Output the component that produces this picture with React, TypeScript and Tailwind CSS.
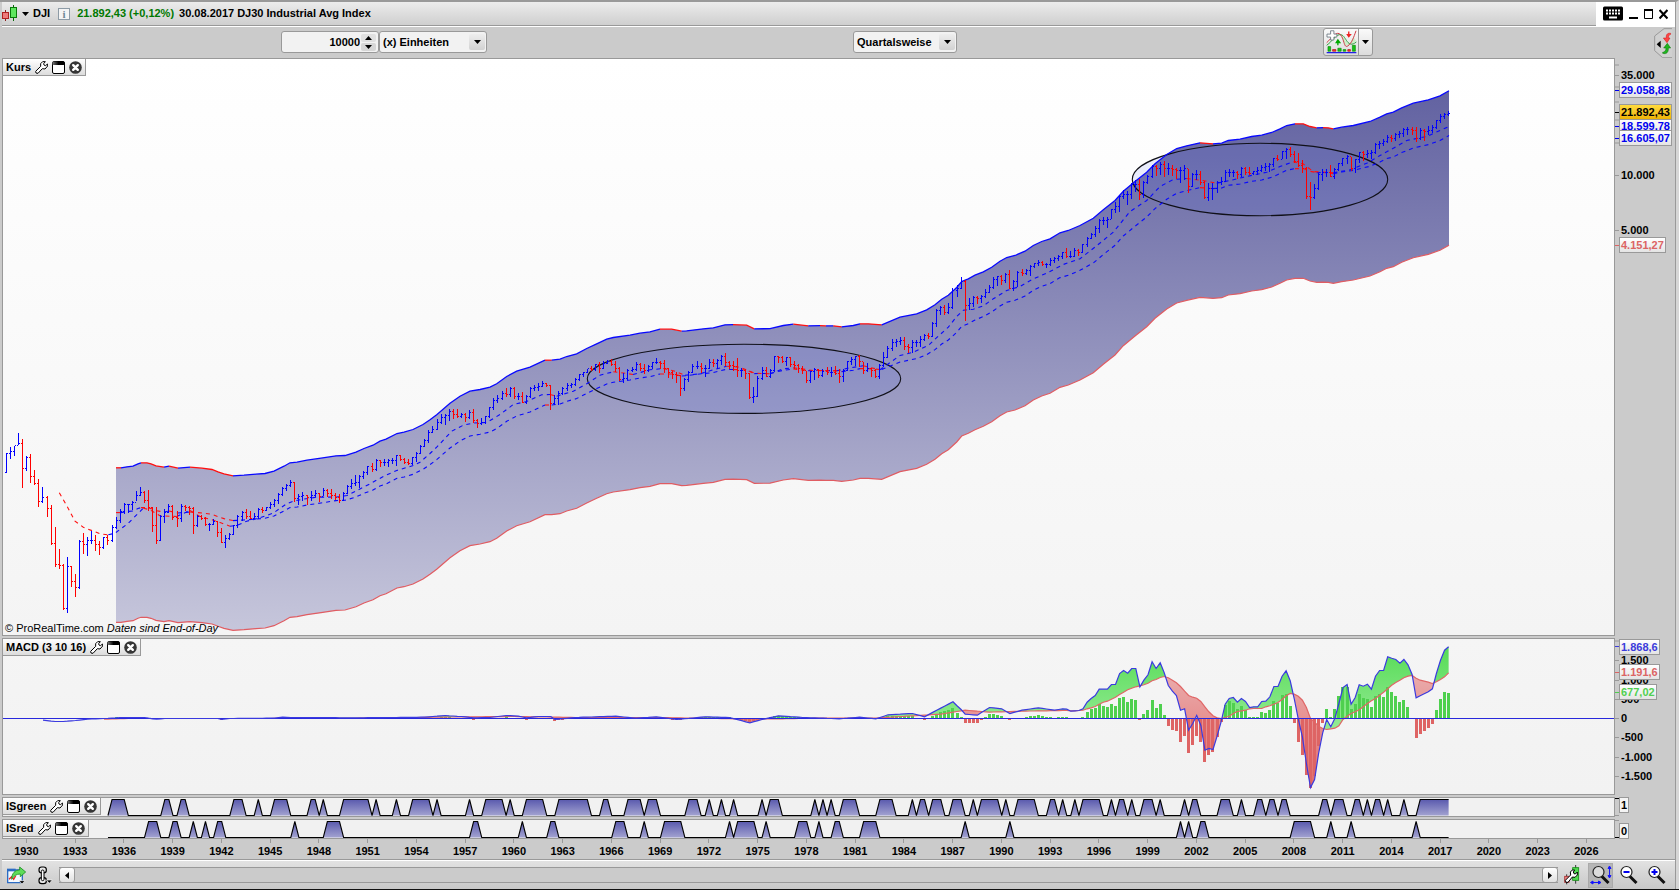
import { useId, type ReactNode } from 'react';

const FIRST_BAR_X = 3.4;
const BAR_STEP = 4.0626;
const PLOT_W = 1611;
const KURS_H = 576;
const MACD_H = 155;

const barX = (i: number) => FIRST_BAR_X + i * BAR_STEP;
const crispX = (i: number) => Math.floor(barX(i)) + 0.5;
const parse = (s: string) => s.trim().split(/[\s,]+/).map(Number);

// high low close per quarter, in thirds of a pixel below `base`
const QUARTERS: { base: number; data: string }[] = [
  {
    base: 351,
    data: `130 190 130, 112 146 124, 108 138 105, 70 105 100, 88 233 176, 138 182 142, 133 220 198,
    180 226 220, 208 290 274, 232 280 262, 258 320 295, 285 405 400, 352 472 462, 418 478 466,
    462 600 596, 442 608 470, 468 532 514, 492 560 532, 390 536 394, 370 432 404, 380 437 392,
    364 402 390, 374 422 402, 392 434 412, 382 418 382, 374 405 390, 346 396 352, 320 356 330,
    298 340 303, 278 312 284, 282 310 283, 274 300 278, 244 274 256, 232 258 246, 244 280 270,
    240 302 292, 290 366 346, 290 402 392, 316 394 320, 298 338 308, 282 310 290, 284 330 322,
    304 350 326, 282 336 290, 284 304 292, 288 314 296, 290 372 346, 316 350 320, 316 330 326,
    322 348 342, 338 362 342, 328 344 334, 334 380 366, 354 400 396, 376 414 384, 368 390 374,
    344 376 346, 316 354 320, 304 332 308, 298 326 318, 302 328 324, 310 328 318, 294 326 298,
    292 308 302, 290 304 292, 276 298 284, 266 292 270, 250 282 254, 230 258 236, 222 242 226,
    210 232 218, 216 276 266, 252 284 258, 246 272 256, 254 284 262, 242 272 256, 240 262 250,
    248 276 260, 234 258 240, 236 262 250, 238 266 256, 250 270 262, 252 280 270, 246 272 250,
    224 252 228, 208 236 220, 196 228 218, 196 234 200, 184 208 186, 168 194 168, 158 186 178,
    146 184 150, 150 172 156, 148 168 156, 148 170 150, 144 162 151, 134 168 136, 134 152 148,
    144 162 156, 146 166 160, 140 166 142, 126 156 130, 106 132 110, 86 112 92, 60 98 66`,
  },
  {
    base: 241,
    data: `378 400 388, 358 390 366, 342 372 352, 342 374 346, 328 362 334, 328 358 344,
    326 354 350, 338 354 344, 338 366 352, 330 358 336, 328 368 360, 356 384 370, 354 374 366,
    348 372 350, 320 354 322, 294 330 300, 286 308 294, 274 300 280, 264 292 284, 262 292 264,
    262 296 288, 280 300 290, 276 310 306, 286 312 290, 262 294 266, 254 272 262, 250 272 258,
    244 262 250, 248 262 256, 254 330 310, 286 314 296, 274 316 280, 262 284 266, 248 272 256,
    250 264 254, 234 258 238, 222 244 224, 216 232 218, 206 218 206, 198 212 208, 192 212 194,
    186 218 206, 184 206 190, 180 192 184, 176 198 194, 182 216 206, 200 244 238, 218 248 236,
    206 240 210, 202 216 209, 186 214 192, 190 214 206, 192 222 212, 196 216 200, 186 208 188,
    174 192 186, 182 206 190, 180 220 206, 204 234 218, 214 236 222, 216 250 226, 226 288 266,
    234 272 238, 212 246 216, 192 220 200, 184 208 199, 188 218 206, 196 230 204, 178 208 188,
    178 200 190, 176 208 182, 164 196 168, 160 198 188, 184 208 196, 182 212 198, 174 230 210,
    204 230 212, 208 236 220, 218 298 292, 262 308 290, 228 292 236, 202 240 212, 200 232 230,
    206 234 212, 168 216 170, 168 188 172, 168 190 184, 172 198 172, 170 202 194, 182 206 196,
    192 218 204, 198 222 212, 214 248 242, 214 248 214, 204 240 208, 208 234 226, 208 230 214,
    202 226 218, 200 232 216, 198 224 220, 206 250 230, 206 246 210, 182 214 184, 172 196 178,
    168 198 170, 166 200 184, 186 222 212, 190 216 204, 204 232 210, 206 234 228, 192 236 196,
    156 200 172`,
  },
  {
    base: 171,
    data: `348 384 356, 326 362 336, 326 350 334, 320 344 330, 320 360 350, 342 370 352,
    330 368 338, 330 352 338, 318 350 328, 312 334 316, 308 328 318, 276 320 280, 238 290 240,
    228 256 232, 226 254 248, 220 252 232, 174 236 182, 166 202 174, 142 176 154, 150 274 226,
    204 240 220, 198 232 202, 198 222 206, 194 220 200, 178 204 186, 164 190 172, 140 176 148,
    138 168 140, 136 166 150, 128 158 132, 120 178 174, 150 182 154, 122 172 126, 118 138 130,
    116 136 122, 106 138 108, 98 114 100, 90 108 98, 92 108 104, 98 114 102, 84 108 90,
    80 100 86, 76 92 80, 66 86 68, 54 84 78, 64 84 79, 54 82 62, 58 78 66, 42 68 44`,
  },
  {
    base: 21,
    data: `472 502 474, 458 476 462, 438 472 446, 418 458 420, 412 436 420, 412 444 418,
    386 418 388, 366 398 380, 346 396 348, 330 358 342, 334 376 343, 308 358 312, 300 336 314,
    298 360 342, 302 354 306, 284 312 290, 254 294 258, 254 288 264, 246 284 252, 244 292 264,
    250 284 266, 254 288 268, 264 296 272, 260 308 271, 254 300 266, 268 338 318, 278 322 284,
    270 300 283, 272 314 306, 304 356 352, 308 364 324, 310 360 326, 304 340 308, 292 316 304,
    270 306 276, 266 290 276, 270 290 277, 272 298 282, 262 290 266, 260 284 276, 262 286 280,
    272 286 274, 262 284 270, 254 276 262, 248 272 260, 248 276 254, 234 262 236, 224 244 237,
    212 238 214, 204 236 208, 200 230 224, 212 250 244, 220 262 256, 240 280 266, 260 358 350,
    305 390 352, 312 358 324, 280 330 282, 266 302 276, 268 290 278, 256 292 290, 264 298 268,
    250 272 250, 234 258 234, 224 252 228, 230 272 266, 236 278 238, 216 248 218, 212 244 224,
    210 234 220, 210 236 218, 190 222 194, 184 206 190, 178 198 184, 164 190 172, 166 186 174,
    158 182 164, 152 174 160, 144 172 148, 140 164 149, 142 164 150, 142 186 176, 144 180 152,
    146 184 154, 138 164 150, 134 158 142, 120 148 122, 102 130 110, 98 118 104, 94 108 100`,
  },
];

type Quarter = { high: number; low: number; close: number };

const quarters: Quarter[] = QUARTERS.flatMap(({ base, data }) => {
  const n = parse(data);
  const out: Quarter[] = [];
  for (let k = 0; k < n.length; k += 3) {
    out.push({ high: base + n[k] / 3, low: base + n[k + 1] / 3, close: base + n[k + 2] / 3 });
  }
  return out;
});

type Point = [number, number];

function points(s: string): Point[] {
  const n = parse(s);
  const out: Point[] = [];
  for (let k = 0; k < n.length; k += 2) out.push([n[k] - 3, n[k + 1] - 58.5]);
  return out;
}

const upperBand = points(`
  116 467.3, 121 467.3, 127 466.3, 133 465.7, 138 463.3, 141 462.3, 147 462.3, 151 463.3, 156 465.3,
  164 466.7, 169 465.7, 178 467.7, 190 466.7, 202 467.7, 212 469, 218 471.3, 224 473.3, 233 475.3,
  244 474.7, 256 473.7, 265 473, 274 470.7, 284 465.7, 290 462.3, 297 461.7, 307 459.7, 321 457.7,
  336 455.3, 345 455, 356 451.7, 364 448, 373 444.7, 380 440.7, 386 438.7, 397 433, 404 431.7,
  413 429, 423 424, 430 419.3, 436.7 414.3, 450 402.7, 460 395.7, 470 390.7, 480 389, 490 386.7,
  496.7 383.3, 506.7 376, 516.7 370.7, 530 366.7, 545 359.7, 551.7 359.7, 560 358.7, 566.7 356,
  576.7 353.3, 586.7 348, 596.7 343.3, 606.7 338.7, 613.3 337, 630 334.7, 640 332.7, 650 331.3,
  660 328.7, 671.7 328.7, 681.7 330.7, 686.7 330.3, 703.3 328.3, 713.3 327.3, 725 324.3,
  733 324.2, 746.7 324.7, 754.3 328.3, 770 328.2, 783.3 325, 793.3 323.7, 808.3 325.3, 820 325.2,
  826 325.4, 833.3 325.3, 841.7 326.3, 853.3 325, 860 323.3, 868.3 323.3, 881.7 324.3, 900 316.7,
  916.7 313.3, 926.7 309.3, 935 304.3, 941.7 298.7, 948.3 294.7, 956.7 287, 961.7 281, 968.3 278.3,
  975 274.7, 983.3 271.3, 991.7 266.7, 1000 260.7, 1006.7 257, 1015 255, 1025 250.7, 1033.3 245,
  1041.7 241, 1050 238.3, 1060 232.3, 1068.3 230, 1080 225, 1093.3 217.7, 1103.3 209.3, 1115 200,
  1123.3 190.7, 1135 181, 1146.7 171.7, 1155 163.3, 1166.7 154, 1176.7 148, 1186.7 145.3,
  1200 142.3, 1213 143.3, 1221.7 142.7, 1228.3 140, 1240 138.7, 1251.7 136, 1261.7 134.7,
  1271.7 132, 1280 128.3, 1286.7 125, 1295 123.3, 1303.3 123.3, 1310 126, 1316.7 127.3, 1323 127.2,
  1328.3 127.3, 1333.3 128.3, 1341.7 126.7, 1353.3 125, 1370 121, 1380 116.7, 1386.7 113.3,
  1393.3 111.7, 1401.7 107.3, 1413.3 102.7, 1428.3 99.3, 1440 95.3, 1449 90.3`);

const fastAverage = points(`
  59.3 492.3, 66.7 505, 75 520.7, 83.3 526.7, 100 533.3, 108.3 534.3, 115 532.7, 128.3 522.7,
  143.3 507.7, 150 509.3, 160 515.3, 176.7 516, 190 510, 200 516, 216.7 520.7, 230 525.7,
  236.7 525, 246.7 520.7, 260 517.3, 273 512.7, 286.7 503.3, 293.3 500.7, 303 498.7, 316.7 496.7,
  336.7 496.5, 347 495, 358.3 489.3, 370 483.3, 383.3 476, 396.7 470, 413.3 465, 420 461.7,
  430 453, 436.7 446.7, 451.7 430.7, 463.3 424.7, 473.3 422.5, 486.7 422, 500 414, 513.3 404,
  526.7 401, 541.7 394.3, 550 394, 556.7 395.7, 573.3 390.7, 586.7 383.3, 600 374.7, 613.3 371.3,
  620 372, 633 374, 650 369.3, 663.3 368, 675 370.7, 685 374.7, 700 373.3, 713.3 369.3,
  726.7 365.7, 740 366.7, 755 372.7, 770 373.3, 783.3 368.3, 793.3 367.3, 813.3 370, 836.7 370.3,
  850 367.3, 863.3 365.3, 880 369.3, 900 355, 913.3 351.7, 928.3 345, 938.3 335.7, 948.3 326.7,
  956.7 316, 963.3 309.7, 973.3 308.7, 983.3 305.3, 993.3 298.3, 1006.7 290, 1020 286,
  1033.3 278.3, 1046.7 272.7, 1063.3 264, 1080 258.2, 1097 245, 1113.3 231.7, 1130 211,
  1146.7 200, 1160 186, 1173.3 179, 1186.7 178, 1203 180, 1216.7 182.7, 1230 180, 1246.7 176,
  1266.7 171.7, 1280 166, 1293.3 161.3, 1303 163.3, 1313.3 171, 1333.3 172.3, 1350 169.3,
  1366.7 162.7, 1380 155, 1393.3 147.7, 1406.7 140, 1426.7 136, 1440 130, 1449 126`);

const shift = (pts: Point[], dy: number): Point[] => pts.map(([x, y]) => [x, y + dy]);
const toPath = (pts: Point[]) => 'M' + pts.map(([x, y]) => `${x.toFixed(1)} ${y.toFixed(1)}`).join('L');

// blue while rising, red while falling or flat
function trendRuns(pts: Point[]) {
  const runs: { down: boolean; pts: Point[] }[] = [];
  for (let k = 1; k < pts.length; k++) {
    const down = pts[k][1] >= pts[k - 1][1];
    const last = runs[runs.length - 1];
    if (last && last.down === down) last.pts.push(pts[k]);
    else runs.push({ down, pts: [pts[k - 1], pts[k]] });
  }
  return runs;
}

function TrendLine({ pts, dashed }: { pts: Point[]; dashed?: boolean }) {
  return (
    <>
      {trendRuns(pts).map((r, k) => (
        <path
          key={k}
          d={toPath(r.pts)}
          fill="none"
          stroke={r.down ? '#ff1010' : '#0808ff'}
          strokeWidth={dashed ? 1.1 : 1.3}
          strokeDasharray={dashed ? '4 4' : undefined}
        />
      ))}
    </>
  );
}

const lowerBand = shift(upperBand, 154.5);
const slowAverage = shift(upperBand, 44.8);

function KursChart() {
  const up: string[] = [];
  const down: string[] = [];
  quarters.forEach((q, i) => {
    const open = i === 0 ? q.low - 1 : quarters[i - 1].close;
    const x = crispX(i);
    const o = Math.floor(open) + 0.5;
    const c = Math.floor(q.close) + 0.5;
    const d = `M${x} ${Math.round(q.high)}V${Math.round(q.low)}M${x - 1.5} ${o}h1M${x + 0.5} ${c}h1`;
    (c > o ? down : up).push(d);
  });
  return (
    <svg className="absolute inset-0 size-full" viewBox={`0 0 ${PLOT_W} ${KURS_H}`} preserveAspectRatio="none" role="img" aria-label="Kurs">
      <defs>
        <linearGradient id="band" gradientUnits="userSpaceOnUse" x1="0" y1="31" x2="0" y2="572">
          <stop offset="0" stopColor="#6262a1" />
          <stop offset="1" stopColor="#c6c6db" />
        </linearGradient>
      </defs>
      <path d={`${toPath(upperBand)}L${toPath([...lowerBand].reverse()).slice(1)}Z`} fill="url(#band)" />
      <g fill="#4664f0" fillOpacity="0.11" stroke="#101018" strokeWidth="1.1">
        <ellipse cx="741" cy="319.8" rx="156.7" ry="34.6" />
        <ellipse cx="1257" cy="120.5" rx="127.7" ry="36.2" />
      </g>
      <path d={toPath(lowerBand)} fill="none" stroke="#e05c62" strokeWidth="1.2" />
      <TrendLine pts={upperBand} />
      <TrendLine pts={slowAverage} dashed />
      <TrendLine pts={fastAverage} dashed />
      <g fill="none" strokeWidth="1" shapeRendering="crispEdges">
        <path d={down.join('')} stroke="#ff0000" />
        <path d={up.join('')} stroke="#0000ff" />
      </g>
    </svg>
  );
}

const MACD_ZERO = 79.5;

// sparse [bar, value] pairs are interpolated up to bar 260, the rest is given per bar
function series(sparse: string, dense: string) {
  const s = parse(sparse);
  const d = parse(dense);
  const out: number[] = [];
  for (let k = 0; k + 3 < s.length; k += 2) {
    for (let i = s[k]; i < s[k + 2]; i++) {
      out[i] = s[k + 1] + ((s[k + 3] - s[k + 1]) * (i - s[k])) / (s[k + 2] - s[k]);
    }
  }
  d.forEach((v, k) => (out[260 + k] = v));
  return out.map((v) => (v - 265) / 3);
}

const macd = series(
  `9 270, 12 274, 14 274, 17 271, 20 267, 24 265, 28 262, 34 262, 36 266, 37 267, 39 265, 52 265,
  53 268, 55 265, 66 264, 68 261, 70 262, 86 263, 95 262, 103 261, 108 256, 112 259, 115 263,
  119 262, 123 256, 126 258, 128 263, 131 259, 134 259, 135 268, 140 262, 150 258, 155 264,
  160 260, 165 268, 172 260, 178 262, 183 278, 186 268, 190 257, 196 262, 205 266, 210 261,
  214 266, 217 254, 223 250, 226 260, 229 240, 233 215, 235 238, 236 252, 239 255, 242 232,
  245 236, 247 250, 250 240, 254 233, 258 240, 260 236`,
  `236 237 243 242 241 236 216 205 196 177 177 177 163 163 130 121 129 115 115 170
  150 134 95 115 98 128 166 183 196 240 236 300 280 256 285 360 355 358 318 275
  222 205 202 216 205 214 232 230 230 214 213 200 169 169 138 122 152 205 267 320
  400 472 448 370 308 268 290 264 220 172 163 222 202 164 168 162 177 138 121 121
  80 84 88 99 88 104 133 203 197 191 185 176 130 90 60 50`,
);

const signal = series(
  `24 267, 30 265, 60 265, 95 264, 105 261, 115 260, 125 259, 140 262, 160 262, 185 267, 200 264,
  214 264, 220 259, 230 252, 236 240, 242 246, 250 243, 260 241`,
  `241 241 242 242 241 240 236 233 229 222 216 213 207 201 193 186 179 174 170 167
  164 159 152 148 142 139 143 150 158 169 183 196 201 204 214 230 245 257 263 265
  262 258 250 244 242 240 236 235 235 235 230 227 222 217 208 197 190 192 198 210
  232 265 276 288 295 298 296 294 287 268 258 250 245 239 230 220 212 205 195 186
  176 165 157 150 143 138 136 144 150 153 156 160 155 148 140 128`,
);

// areas between the two lines, split where they cross
function macdAreas() {
  const areas: { up: boolean; d: string }[] = [];
  let top: Point[] = [];
  let bottom: Point[] = [];
  let up = macd[60] < signal[60];
  const flush = () => {
    if (top.length > 1) areas.push({ up, d: `${toPath(top)}L${toPath([...bottom].reverse()).slice(1)}Z` });
  };
  for (let i = 60; i < macd.length; i++) {
    const diff = macd[i] - signal[i];
    if (i > 60 && diff < 0 !== up) {
      const prev = macd[i - 1] - signal[i - 1];
      const t = prev / (prev - diff || 1);
      const cross: Point = [barX(i - 1 + t), MACD_ZERO + macd[i - 1] + (macd[i] - macd[i - 1]) * t];
      top.push(cross);
      bottom.push(cross);
      flush();
      top = [cross];
      bottom = [cross];
      up = diff < 0;
    }
    top.push([barX(i), MACD_ZERO + macd[i]]);
    bottom.push([barX(i), MACD_ZERO + signal[i]]);
  }
  flush();
  return areas;
}

const linePoints = (values: number[], from: number): Point[] =>
  values.map((v, i): Point => [barX(i), MACD_ZERO + v]).slice(from);

function MacdChart() {
  return (
    <svg className="absolute inset-0 size-full" viewBox={`0 0 ${PLOT_W} ${MACD_H}`} preserveAspectRatio="none" role="img" aria-label="MACD">
      <defs>
        <linearGradient id="gain" gradientUnits="userSpaceOnUse" x1="0" y1="10" x2="0" y2="100">
          <stop offset="0" stopColor="#58dc58" />
          <stop offset="1" stopColor="#9cec9c" />
        </linearGradient>
        <linearGradient id="loss" gradientUnits="userSpaceOnUse" x1="0" y1="30" x2="0" y2="150">
          <stop offset="0" stopColor="#eaaeae" />
          <stop offset="1" stopColor="#e26a6a" />
        </linearGradient>
      </defs>
      {macdAreas().map((a, k) => (
        <path key={k} d={a.d} fill={a.up ? 'url(#gain)' : 'url(#loss)'} />
      ))}
      <g shapeRendering="crispEdges">
        {signal.map((s, i) => {
          const h = macd[i] - s;
          if (Math.abs(h) < 0.6) return null;
          return (
            <rect
              key={i}
              x={Math.floor(barX(i)) - 1}
              width="3"
              y={h < 0 ? MACD_ZERO + h : MACD_ZERO}
              height={Math.abs(h)}
              fill={h < 0 ? '#4fd04f' : '#de6464'}
            />
          );
        })}
      </g>
      <path d={toPath(linePoints(signal, 24))} fill="none" stroke="#e06666" strokeWidth="1.2" />
      <path d={`M0 ${MACD_ZERO}H${PLOT_W}`} stroke="#2828dc" strokeWidth="1" />
      <path d={toPath(linePoints(macd, 9))} fill="none" stroke="#3a3adf" strokeWidth="1.2" />
    </svg>
  );
}

const GREEN_RUNS = parse(`26 29 39 40 43 44 56 58 62 62 66 69 75 76 78 78 83 89 91 91 96 96 100 104
  106 106 114 114 118 122 124 124 128 132 136 143 147 148 153 156 158 160 168 170 173 173 176 176
  179 179 186 186 188 190 199 199 201 201 203 203 206 209 215 218 223 223 225 226 228 230 233 235
  238 238 240 244 246 246 249 253 257 258 260 260 263 263 265 269 272 272 274 275 277 277 280 282
  284 284 290 290 292 293 299 301 304 304 308 309 311 312 314 315 324 325 327 329 332 333 335 335
  337 338 340 340 344 344 348 355`);
const RED_RUNS = parse(`35 37 41 42 46 46 49 49 52 53 71 71 79 82 115 116 127 127 134 135 150 152
  157 157 162 166 178 178 180 184 187 187 195 197 200 200 204 205 211 214 236 236 247 247 289 289
  291 291 294 295 317 321 326 326 331 331 347 347`);

function FlagChart({ runs, label }: { runs: number[]; label: string }) {
  const id = useId();
  const last = 355;
  let d = `M${barX(25)} 17.5`;
  for (let k = 0; k < runs.length; k += 2) {
    const [a, b] = [runs[k], runs[k + 1]];
    d += `L${barX(a - 1)} 17.5L${barX(a)} 1.5L${barX(b)} 1.5`;
    if (b < last) d += `L${barX(b + 1)} 17.5`;
  }
  const open = runs[runs.length - 1] === last;
  const line = open ? d : `${d}L${barX(last)} 17.5`;
  return (
    <svg className="absolute inset-0 size-full" viewBox={`0 0 ${PLOT_W} 18`} preserveAspectRatio="none" role="img" aria-label={label}>
      <linearGradient id={id} x1="0" y1="0" x2="0" y2="1">
        <stop offset="0" stopColor="#5a5aae" />
        <stop offset="1" stopColor="#a2a2d0" />
      </linearGradient>
      <path d={`${line}L${barX(last)} 17.5Z`} fill={`url(#${id})`} />
      <path d={line} fill="none" stroke="#000" strokeWidth="1.1" />
    </svg>
  );
}

function WrenchIcon() {
  return (
    <svg className="size-[13px]" viewBox="0 0 39 39" aria-hidden="true">
      <path
        d="M2 31L17 16 17 8 23 2H31L26 8 27 12 31 14 38 9V15L30 24 22 23 9 37 3 36Z"
        fill="#fff"
        stroke="#000"
        strokeWidth="3"
        strokeLinejoin="round"
      />
    </svg>
  );
}

function WindowIcon() {
  return (
    <svg className="size-[13px]" viewBox="0 0 13 13" aria-hidden="true">
      <linearGradient id="winbar" x1="0" y1="0" x2="1" y2="0">
        <stop offset="0" stopColor="#777" />
        <stop offset="0.5" stopColor="#000" />
      </linearGradient>
      <rect x="0.5" y="0.5" width="12" height="12" rx="1.5" fill="#fff" stroke="#000" />
      <rect x="0.5" y="0.5" width="12" height="3.5" rx="1" fill="url(#winbar)" />
    </svg>
  );
}

function CloseIcon() {
  return (
    <svg className="size-[13px]" viewBox="0 0 13 13" aria-hidden="true">
      <circle cx="6.5" cy="6.5" r="6.3" fill="#363636" />
      <path d="M4.2 4.2l4.6 4.6M8.8 4.2L4.2 8.8" stroke="#fff" strokeWidth="2.4" strokeLinecap="round" />
    </svg>
  );
}

function PanelTag({ title }: { title: string }) {
  return (
    <div className="absolute left-0 top-0 flex h-[17px] items-center gap-1 border-b border-r border-[#999] bg-linear-to-b from-white to-[#dcdcdc] pl-[3px] pr-[3px]">
      <span className="whitespace-nowrap leading-4">{title}</span>
      <button type="button" aria-label={`${title} Einstellungen`}><WrenchIcon /></button>
      <button type="button" aria-label={`${title} Fenster`}><WindowIcon /></button>
      <button type="button" aria-label={`${title} schließen`}><CloseIcon /></button>
    </div>
  );
}

type AxisMark = { y: number; text?: string; tag?: string; tick?: string };

const KURS_MARKS: AxisMark[] = [
  { y: 7 },
  { y: 17, text: '35.000' },
  { y: 29 },
  { y: 44 },
  { y: 62 },
  { y: 85 },
  { y: 117, text: '10.000' },
  { y: 172, text: '5.000' },
  { y: 32, text: '29.058,88', tag: 'text-[#0000f0] bg-linear-to-b from-white to-[#e4e4e4]', tick: 'bg-[#0000f0]' },
  { y: 68, text: '18.599,78', tag: 'text-[#0000f0] bg-linear-to-b from-white to-[#e4e4e4]', tick: 'bg-[#0000f0]' },
  { y: 54, text: '21.892,43', tag: 'text-black bg-linear-to-b from-[#ffdb3c] to-[#eeb400]', tick: 'bg-black' },
  { y: 80, text: '16.605,07', tag: 'text-[#0000f0] bg-linear-to-b from-white to-[#e4e4e4]', tick: 'bg-[#0000f0]' },
  { y: 187, text: '4.151,27', tag: 'text-[#dc6464] bg-linear-to-b from-white to-[#e4e4e4]', tick: 'bg-[#dc6464]' },
];

const MACD_MARKS: AxisMark[] = [
  { y: 3 },
  { y: 22, text: '1.500' },
  { y: 42, text: '1.000' },
  { y: 61, text: '500' },
  { y: 80, text: '0' },
  { y: 99, text: '-500' },
  { y: 119, text: '-1.000' },
  { y: 138, text: '-1.500' },
  { y: 9, text: '1.868,6', tag: 'text-[#3c3cdc] bg-linear-to-b from-white to-[#e4e4e4]', tick: 'bg-[#3c3cdc]' },
  { y: 34, text: '1.191,6', tag: 'text-[#dc6464] bg-linear-to-b from-white to-[#e4e4e4]', tick: 'bg-[#dc6464]' },
  { y: 54, text: '677,02', tag: 'text-[#50d050] bg-linear-to-b from-white to-[#e4e4e4]', tick: 'bg-[#50d050]' },
];

function Axis({ marks, height }: { marks: AxisMark[]; height: number }) {
  return (
    <div className="relative w-[60px] shrink-0">
      {marks.map((m, k) => (
        <div key={k} className="absolute left-0 flex -translate-y-1/2 items-center" style={{ top: `${(m.y / height) * 100}%` }}>
          <span className={`h-px w-1 ${m.tick ?? 'bg-[#999]'}`} />
          {m.text && (
            <span className={`border px-px leading-[14px] ${m.tag ? `border-[#999] ${m.tag}` : 'border-transparent'}`}>{m.text}</span>
          )}
        </div>
      ))}
    </div>
  );
}

type PanelRowProps = { className: string; plot: string; axis: ReactNode; children: ReactNode };

function PanelRow({ className, plot, axis, children }: PanelRowProps) {
  return (
    <section className={`flex ${className}`}>
      <div className={`relative min-w-0 flex-1 border border-[#999] ${plot}`}>{children}</div>
      {axis}
    </section>
  );
}

const YEARS = Array.from({ length: 33 }, (_, k) => 1930 + 3 * k);

function Caret({ className = '' }: { className?: string }) {
  return (
    <svg className={`h-1 w-[7px] ${className}`} viewBox="0 0 7 4" aria-hidden="true">
      <path d="M0 0H7L3.5 4Z" fill="#000" />
    </svg>
  );
}

function Select({ label, width, options }: { label: string; width: string; options: string[] }) {
  return (
    <div className={`relative h-[22px] ${width}`}>
      <select aria-label={label} className="size-full appearance-none rounded-[3px] border border-[#999] bg-[#f2f2f2] pl-[3px] pr-5 outline-none">
        {options.map((o) => (
          <option key={o}>{o}</option>
        ))}
      </select>
      <span className="pointer-events-none absolute inset-y-[3px] right-[2px] flex w-4 items-center justify-center rounded-xs bg-linear-to-b from-[#eee] to-[#d2d2d2]">
        <Caret />
      </span>
    </div>
  );
}

function TitleBar() {
  return (
    <header className="flex h-6 items-center border-b border-[#999] bg-linear-to-b from-[#ececec] to-[#cfcfcf]">
      <svg className="h-[17px] w-4" viewBox="0 0 16 17" aria-hidden="true">
        <path d="M3.5 5v11" stroke="#8c1f1f" />
        <rect x="0.5" y="7.5" width="6" height="6" fill="#ee7b7b" stroke="#b02020" />
        <path d="M11.5 0v16" stroke="#0a6a0a" />
        <rect x="8.5" y="2.5" width="6" height="10" fill="#5fe65f" stroke="#0a7a0a" />
      </svg>
      <button type="button" aria-label="Wert auswählen" className="ml-1 flex items-center gap-1">
        <Caret />
        <span>DJI</span>
      </button>
      <span className="ml-2 flex size-3 items-center justify-center border border-[#8d9ba6] bg-[#f4f4f4] font-['Liberation_Serif',serif] leading-3 text-[#6f8796]">i</span>
      <span className="ml-[7px] text-[#007800]">21.892,43 (+0,12%)</span>
      <span className="ml-[5px]">30.08.2017</span>
      <span className="ml-[3px]">DJ30 Industrial Avg Index</span>
      <div className="ml-auto flex h-6 items-center gap-[6px] bg-white px-[7px]">
        <svg className="h-[15px] w-5" viewBox="0 0 20 15" aria-hidden="true">
          <rect width="20" height="14" y="0.5" rx="1.5" fill="#000" />
          <path d="M3 4.5h14M3 7.5h14" stroke="#fff" strokeWidth="2" strokeDasharray="2 1" />
          <path d="M6 11.5h8" stroke="#fff" strokeWidth="2" />
        </svg>
        <button type="button" aria-label="Minimieren">
          <svg className="h-3 w-[9px]" viewBox="0 0 9 12"><path d="M0 10h9" stroke="#000" strokeWidth="2" /></svg>
        </button>
        <button type="button" aria-label="Maximieren">
          <svg className="h-3 w-[9px]" viewBox="0 0 9 12"><path d="M0.5 2.5h8v8h-8z" fill="none" stroke="#000" /><path d="M0 2h9" stroke="#000" strokeWidth="2" /></svg>
        </button>
        <button type="button" aria-label="Schließen">
          <svg className="h-3 w-[9px]" viewBox="0 0 9 12"><path d="M0.5 2L8.5 10.5M8.5 2L0.5 10.5" stroke="#000" strokeWidth="2.2" /></svg>
        </button>
      </div>
    </header>
  );
}

function IndicatorIcon() {
  return (
    <svg className="h-6 w-[31px]" viewBox="0 0 94 72" aria-hidden="true">
      <path d="M4 44C20 34 30 12 44 14S60 56 92 34L84 22 70 44 58 46 44 12 30 22Z" fill="#cdeec9" />
      <path d="M2 46C20 34 30 10 46 14S64 58 92 36" fill="none" stroke="#2e9e3c" strokeWidth="3" />
      <path d="M2 38C18 24 32 0 44 14S54 56 66 48 84 22 91 2" fill="none" stroke="#cc3a44" strokeWidth="3" />
      <path d="M14 2h10v10h9v9h-9v9H14v-9H3v-9h11z" fill="#fff" stroke="#66727c" strokeWidth="2.5" />
      <path d="M69 4v10M65 14h9l-5 6z" stroke="#e22" strokeWidth="4" fill="#e22" />
      <path d="M36 46V38M31 38h11l-6-8z" stroke="#0a0" strokeWidth="4" fill="#0a0" />
      <path d="M6 64V50h8v14zM36 64v-9h10v9zM52 64v-5h8v5zM80 64V46h9v18z" fill="#16c316" stroke="#0a8a0a" strokeWidth="2" />
      <path d="M20 64v-5h10v5zM66 64v-5h8v5z" fill="#f33" stroke="#a11" strokeWidth="2" />
      <path d="M2 68H92" stroke="#2222e6" strokeWidth="4" />
    </svg>
  );
}

function Toolbar() {
  return (
    <div className="grid h-8 grid-cols-[279fr_572fr_470fr_331fr_21fr] border-t border-white">
      <div className="col-start-2 flex pt-1">
        <div className="flex h-[22px] w-[98px] items-center rounded-[3px] border border-[#999] bg-[#f2f2f2] pr-[2px]">
          <input aria-label="Anzahl" defaultValue="10000" className="min-w-0 flex-1 bg-transparent text-right outline-none" />
          <span className="ml-px flex w-[15px] flex-col gap-px">
            <button type="button" aria-label="Mehr" className="flex h-2 items-center justify-center rounded-xs bg-[#e0e0e0]">
              <Caret className="w-[5px] rotate-180" />
            </button>
            <button type="button" aria-label="Weniger" className="flex h-2 items-center justify-center rounded-xs bg-[#d6d6d6]">
              <Caret className="w-[5px]" />
            </button>
          </span>
        </div>
        <Select label="Einheit" width="w-[108px]" options={['(x) Einheiten', 'Jahre']} />
      </div>
      <div className="flex pt-1">
        <Select label="Periode" width="w-[104px]" options={['Quartalsweise', 'Monatlich', 'Wöchentlich']} />
      </div>
      <div className="flex pt-px">
        <div className="flex h-[28px] overflow-hidden rounded-[3px] border border-[#999] bg-linear-to-b from-[#fafafa] to-[#dcdcdc]">
          <button type="button" aria-label="Indikator hinzufügen" className="flex w-[35px] items-center justify-center border-r border-[#999]">
            <IndicatorIcon />
          </button>
          <button type="button" aria-label="Indikatorliste" className="flex w-[13px] items-center justify-center">
            <Caret />
          </button>
        </div>
      </div>
      <button type="button" aria-label="Handelsleiste">
        <svg className="h-[30px] w-[18px]" viewBox="0 0 54 90" aria-hidden="true">
          <path d="M54 2H30L2 24V68L26 89H54" fill="#d0d0d0" stroke="#999" strokeWidth="3" />
          <path d="M20 38V60L8 49Z" fill="#000" />
          <path d="M50 16C38 14 36 22 37 30H28L39 44 48 30H43C43 24 46 20 50 19Z" fill="#f44" stroke="#c11" strokeWidth="1.5" />
          <path d="M26 76C38 80 44 72 43 60H50L40 46 29 60H36C36 68 32 72 26 73Z" fill="#1fb51f" stroke="#087008" strokeWidth="1.5" />
        </svg>
      </button>
    </div>
  );
}

function MagnifierIcon({ sign, arrows }: { sign?: '+' | '-'; arrows?: boolean }) {
  return (
    <svg className="h-5 w-[18px] overflow-visible" viewBox="0 0 18 20" aria-hidden="true">
      <path d="M9.5 11L16.5 18" stroke="#111" strokeWidth="3" />
      <circle cx="6.5" cy="7" r="5.5" fill={arrows ? '#dcdcdc' : '#fff'} stroke="#222" strokeWidth="1.2" />
      {sign && <path d={sign === '+' ? 'M3.5 7h6M6.5 4v6' : 'M3.5 7h6'} stroke="#0000ee" strokeWidth="2" />}
      {arrows && (
        <g stroke="#1414ff" fill="#1414ff" strokeWidth="1">
          <path d="M17.5 3v8M0 17.5h7" />
          <path d="M17.5 1l1.5 2.500h-3zM17.5 13l1.5-2.500h-3zM-1.5 17.5l2.5-1.5v3zM9 17.5l-2.5-1.5v3z" />
        </g>
      )}
    </svg>
  );
}

function Footer() {
  return (
    <footer className="flex h-[29px] items-center border-t border-white bg-linear-to-b from-[#e2e2e2] to-[#c8c8c8] pl-[5px] pr-[9px]">
      <button type="button" aria-label="Exportieren">
        <svg className="h-[19px] w-[19px]" viewBox="0 0 57 57" aria-hidden="true">
          <path d="M2 12H46V50H2Z" fill="#f4f9ff" stroke="#2c6cc4" strokeWidth="4" />
          <path d="M0 12H26" stroke="#2c6cc4" strokeWidth="8" />
          <path d="M6 40L14 32 20 40 26 30" fill="none" stroke="#e22" strokeWidth="4" />
          <path d="M14 40C14 22 24 12 38 12V3L56 18 40 32V24C28 24 20 30 14 40Z" fill="#5fdc5a" stroke="#1d8f22" strokeWidth="2.5" />
          <path d="M36 44H54L45 54Z" fill="#000" stroke="#fff" strokeWidth="2" />
        </svg>
      </button>
      <button type="button" aria-label="Verknüpfen" className="ml-[11px]">
        <svg className="h-[19px] w-4" viewBox="0 0 48 57" aria-hidden="true">
          <g fill="#e8e8e8" stroke="#000" strokeWidth="3.5">
            <rect x="6" y="3" width="22" height="18" rx="8" />
            <rect x="6" y="35" width="22" height="18" rx="8" />
          </g>
          <path d="M14 17H20M14 39H20" stroke="#fff" strokeWidth="8" />
          <rect x="13" y="12" width="8" height="32" rx="4" fill="#fff" stroke="#000" strokeWidth="3" />
          <path d="M28 42H46L37 52Z" fill="#000" stroke="#fff" strokeWidth="2" />
        </svg>
      </button>
      <div className="ml-[6px] flex h-4 min-w-0 flex-1 border-y border-[#999] bg-[#cbcbcb]">
        <button type="button" aria-label="Zurück" className="-my-px flex w-4 items-center justify-center rounded-[3px] border border-[#999] bg-linear-to-b from-white to-[#e0e0e0]">
          <svg className="h-[7px] w-1" viewBox="0 0 4 7"><path d="M4 0V7L0 3.5Z" /></svg>
        </button>
        <button type="button" aria-label="Vor" className="-my-px ml-auto flex w-4 items-center justify-center rounded-[3px] border border-[#999] bg-linear-to-b from-white to-[#e0e0e0]">
          <svg className="h-[7px] w-1" viewBox="0 0 4 7"><path d="M0 0V7L4 3.5Z" /></svg>
        </button>
      </div>
      <button type="button" aria-label="Chart-Einstellungen" className="ml-[6px]">
        <svg className="h-5 w-4" viewBox="0 0 48 60" aria-hidden="true">
          <path d="M8 28V58M35 0V56" stroke="#333" strokeWidth="3" />
          <rect x="2" y="34" width="13" height="18" fill="#e98080" stroke="#a33" strokeWidth="2.5" />
          <rect x="26" y="8" width="18" height="38" fill="#4fd94f" stroke="#178a17" strokeWidth="2.5" />
          <path d="M4 46L20 30 19 21 25 15H32L28 21 30 26 34 27 40 21V30L33 37 25 36 12 52 6 52Z" fill="#fff" stroke="#000" strokeWidth="3" />
        </svg>
      </button>
      <button type="button" aria-label="Autozoom" aria-pressed="true" className="ml-[8px] flex h-[25px] w-[25px] items-center justify-center border border-[#aaa] bg-[#b6b6b6]">
        <MagnifierIcon arrows />
      </button>
      <button type="button" aria-label="Verkleinern" className="ml-[7px]"><MagnifierIcon sign="-" /></button>
      <button type="button" aria-label="Vergrößern" className="ml-[10px]"><MagnifierIcon sign="+" /></button>
    </footer>
  );
}

function FlagAxis({ value, top }: { value: string; top?: boolean }) {
  return (
    <div className="flex w-[60px] shrink-0 items-stretch">
      <span className={`my-px w-1 border-y ${top ? 'border-t-black border-b-[#999]' : 'border-t-[#999] border-b-black'}`} />
      <span className={`flex h-4 items-center border border-[#999] bg-[#f4f4f4] px-px ${top ? '' : 'self-end'}`}>{value}</span>
    </div>
  );
}

export default function App() {
  return (
    <div className="flex min-h-screen flex-col border-b border-b-[#111] bg-[#cbcbcb] font-['Liberation_Sans',Arial,sans-serif] text-[11px] font-bold text-black">
      <div className="flex flex-1 flex-col border-r-[3px] border-t-2 border-r-[#d6d6d6] border-t-[#999]">
        <div className="flex flex-1 flex-col border-r border-[#999] pl-[2px]">
          <TitleBar />
          <Toolbar />
          <main className="flex flex-1 flex-col gap-[2px]">
            <PanelRow
              className="min-h-[300px] flex-1"
              plot="bg-linear-to-b from-white to-[#f4f4f4]"
              axis={<Axis marks={KURS_MARKS} height={578} />}
            >
              <KursChart />
              <PanelTag title="Kurs" />
              <p className="absolute bottom-0 left-[2px] font-normal leading-[13px]">
                © ProRealTime.com <em>Daten sind End-of-Day</em>
              </p>
            </PanelRow>
            <PanelRow
              className="h-[157px]"
              plot="bg-linear-to-b from-[#f5f5f5] to-[#f2f2f2]"
              axis={<Axis marks={MACD_MARKS} height={157} />}
            >
              <MacdChart />
              <PanelTag title="MACD (3 10 16)" />
            </PanelRow>
            <PanelRow className="h-5" plot="bg-[#f1f1f1]" axis={<FlagAxis value="1" top />}>
              <FlagChart runs={GREEN_RUNS} label="ISgreen" />
              <PanelTag title="ISgreen" />
            </PanelRow>
            <PanelRow className="h-5" plot="bg-[#f1f1f1]" axis={<FlagAxis value="0" />}>
              <FlagChart runs={RED_RUNS} label="ISred" />
              <PanelTag title="ISred" />
            </PanelRow>
          </main>
          <div className="mr-16 flex h-5">
            {YEARS.map((y) => (
              <div key={y} className="flex min-w-0 flex-1 flex-col items-center">
                <span className="h-1 w-px bg-[#999]" />
                <span className="leading-4">{y}</span>
              </div>
            ))}
          </div>
          <div className="h-px bg-[#999]" />
          <Footer />
        </div>
      </div>
    </div>
  );
}
